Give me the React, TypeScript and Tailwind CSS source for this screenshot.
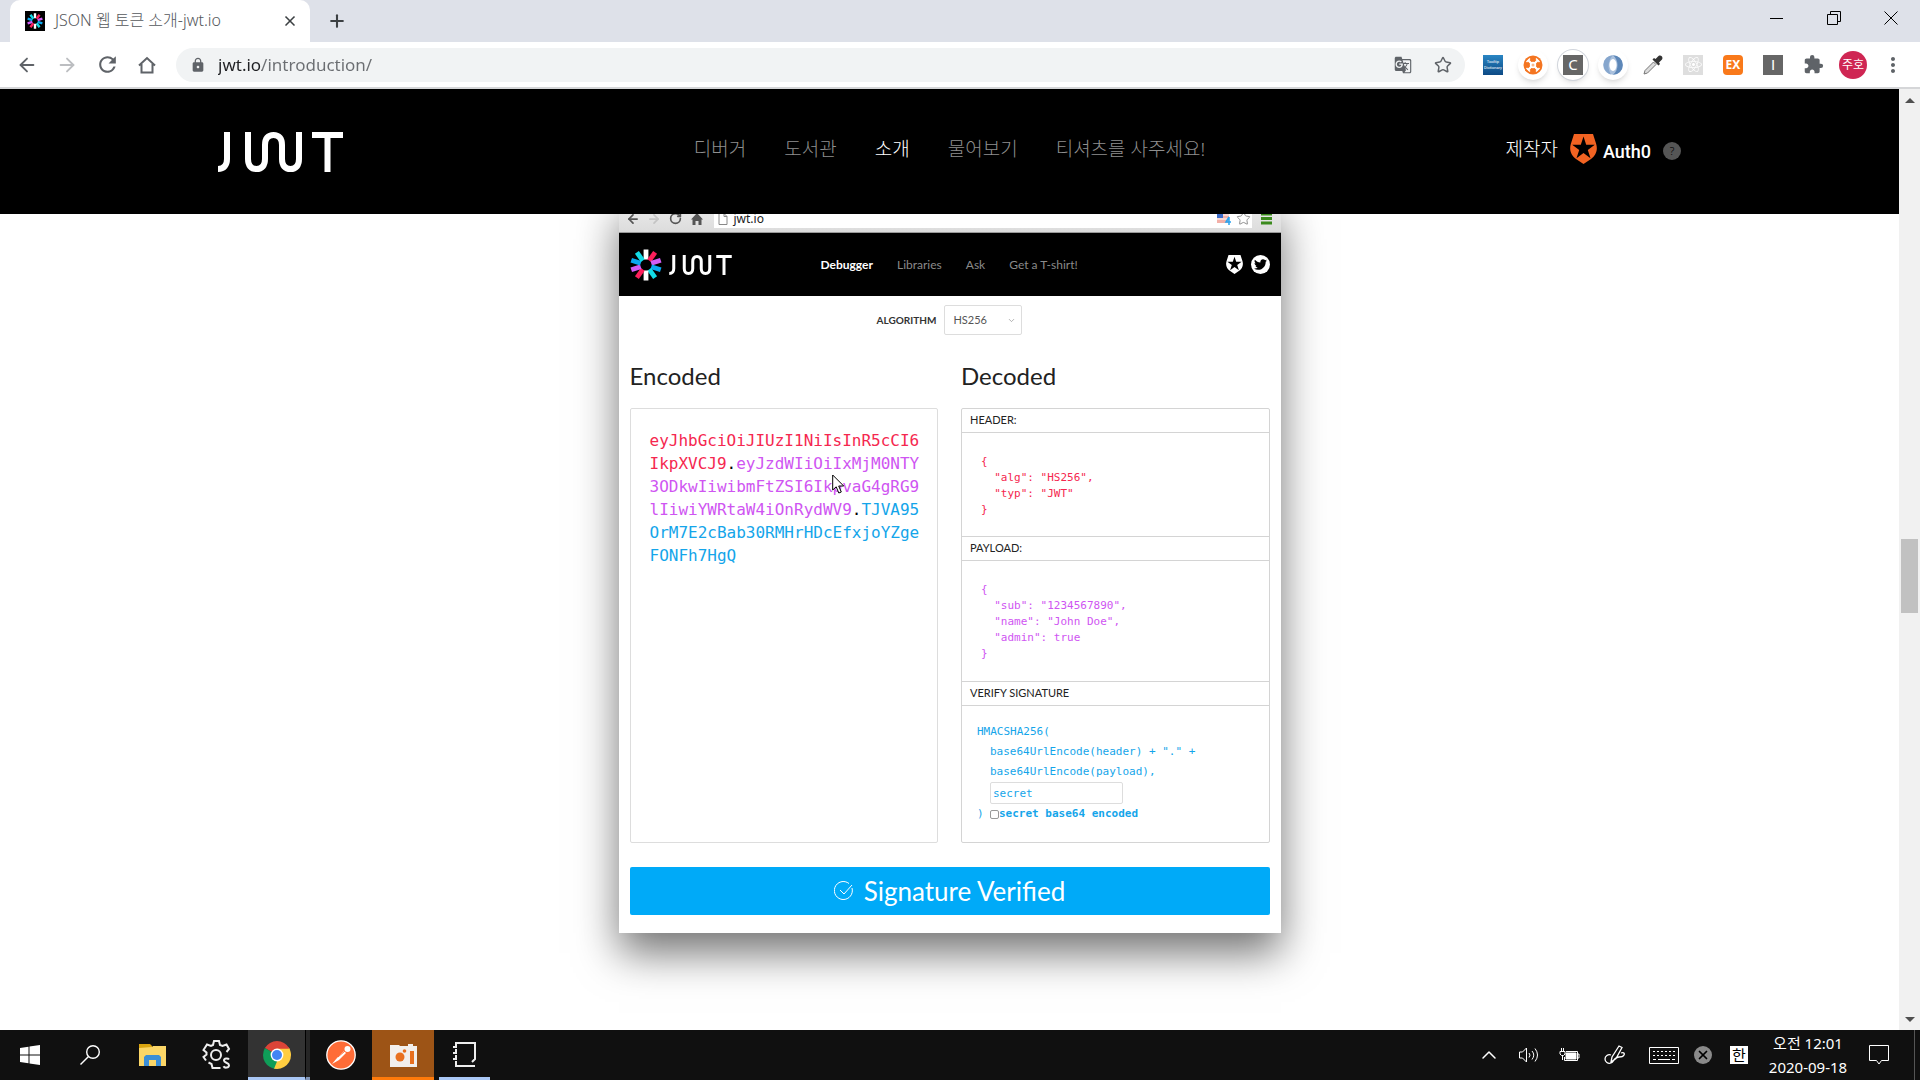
import React from "react";
import { ArrowLeft, ArrowRight, RotateCw, Star, Plus, X, ChevronUp, ChevronDown } from "lucide-react";
import { MdGTranslate, MdExtension, MdMoreVert, MdLock, MdRefresh } from "react-icons/md";
import { FaTwitter, FaReact } from "react-icons/fa";

const SANS = "font-['Noto_Sans','Noto_Sans_CJK_KR',sans-serif]";
const LATO = "font-['Lato','Noto_Sans_CJK_KR',sans-serif]";
const MONO = "font-['DejaVu_Sans_Mono',monospace]";

const BURST = ["#ffffff", "#fb1f5b", "#d25cf5", "#0aa9f1", "#12dbe6", "#ffffff", "#fb1f5b", "#d25cf5", "#0aa9f1", "#12dbe6"];

function Burst({ className }: { className: string }) {
  return (
    <svg viewBox="-16 -16 32 32" className={className} aria-hidden="true">
      {BURST.map((c, i) => (
        <rect key={i} x="-2.4" y="-15.500" width="4.800" height="10" fill={c} transform={`rotate(${i * 36})`} />
      ))}
    </svg>
  );
}

function JwtMark({ className }: { className: string }) {
  return (
    <svg viewBox="0 0 125 40" className={className} fill="none" stroke="white" strokeWidth="6" role="img" aria-label="JWT">
      <path d="M0 37c6 0 9-4 9-10V0" />
      <path d="M30 0v27c0 6.500 3 10 8.500 10s8.500-3.500 8.500-10V13c0-6.500 3-10 8.500-10S64 6.500 64 13v14c0 6.500 3 10 8.500 10S81 33.500 81 27V0" />
      <path d="M94 3h31M109.500 3v37" />
    </svg>
  );
}

function Shield({ className }: { className: string }) {
  return (
    <svg viewBox="0 0 27 30" className={className} fill="currentColor" aria-hidden="true">
      <path fillRule="evenodd" d="M4 0h19l3.200 10c2 7-1 12-5.200 15L13.500 30 6 25C1.800 22-1.200 17 .8 10zM13.500 2.500l-2.700 8.300H2.200l7 5.100-2.700 8.300 7-5.100 7 5.100-2.700-8.300 7-5.100h-8.600z" />
    </svg>
  );
}

function TabStrip() {
  return (
    <div className="flex h-[42px] items-end bg-[#dee1e9]">
      <div className="ml-[10px] flex h-[42px] w-[300px] items-center rounded-t-[10px] bg-white pl-[15px] pr-3">
        <span className="flex size-5 items-center justify-center bg-black"><Burst className="size-4" /></span>
        <span className="ml-[10px] flex-1 whitespace-nowrap pb-[2px] text-[16px] font-light text-[#55585c]">JSON 웹 토큰 소개-jwt.io</span>
        <button aria-label="Close tab" className="text-[#3c4043]"><X size={16} strokeWidth={2.5} /></button>
      </div>
      <button aria-label="New tab" className="ml-[17px] flex h-[42px] items-center text-[#3c4043]"><Plus size={20} strokeWidth={2.5} /></button>
      <div className="ml-auto mr-px flex h-9 items-center self-start text-black">
        <button aria-label="Minimize" className="flex w-[57px] justify-center"><span className="h-px w-[13px] bg-black" /></button>
        <button aria-label="Restore" className="flex w-[57px] justify-center">
          <svg width="14" height="14" fill="none" stroke="currentColor" aria-hidden="true"><path d="M.5 3.500h10v10H.5zM3.500 3.500v-3h10v10h-3" /></svg>
        </button>
        <button aria-label="Close" className="flex w-[57px] justify-center">
          <svg width="14" height="14" stroke="currentColor" aria-hidden="true"><path d="M.5.5l13 13M13.500.5l-13 13" /></svg>
        </button>
      </div>
    </div>
  );
}

const SLOT = "flex w-10 items-center justify-center";

function Toolbar() {
  return (
    <div className="flex h-[47px] items-center border-b-2 border-[#d5d6d8] bg-white pl-[7px] pr-[7px] text-[#5f6368]">
      <button aria-label="Back" className={SLOT}><ArrowLeft size={22} /></button>
      <button aria-label="Forward" className={`${SLOT} text-[#bcbec1]`}><ArrowRight size={22} /></button>
      <button aria-label="Reload" className={SLOT}><MdRefresh size={25} /></button>
      <button aria-label="Home" className={SLOT}>
        <svg width="18" height="18" viewBox="0 0 18 18" fill="none" stroke="currentColor" strokeWidth="2" aria-hidden="true"><path d="M1 9.500L9 2l8 7.500M3.500 8v8.500h11V8" /></svg>
      </button>
      <div className="ml-[9px] flex h-[34px] flex-1 items-center rounded-full bg-[#f1f3f4] pl-[14px] pr-[2px]">
        <MdLock size={16} />
        <input
          aria-label="Address"
          defaultValue="jwt.io/introduction/"
          className="ml-[12px] h-7 min-w-0 flex-1 bg-[linear-gradient(to_right,#202124_44px,#6b6e72_44px)] bg-clip-text text-[17px] leading-7 text-transparent outline-none"
        />
        <button aria-label="Translate" className={SLOT}><MdGTranslate size={18} /></button>
        <button aria-label="Bookmark" className={SLOT}><Star size={18} /></button>
      </div>
      <div className="ml-2 flex">
        <button aria-label="Tooltip Dictionary" className={SLOT}>
          <span className="flex size-5 flex-col items-center justify-center bg-gradient-to-b from-[#2a86c4] to-[#0d4a85] font-['Roboto',sans-serif] text-[4px] leading-[6px] text-white"><span>Tooltip</span><span>Dictionary</span></span>
        </button>
        <button aria-label="Extension" className={SLOT}>
          <span className="flex size-[30px] items-center justify-center rounded-full bg-white shadow-md">
            <svg viewBox="-10 -10 20 20" className="size-5" aria-hidden="true">
              <circle r="9.500" fill="#f47521" /><path d="M-5-5L5 5M5-5L-5 5" stroke="#fff" strokeWidth="2.200" /><path d="M-6.500-3L-3-6.500M3-6.500L6.500-3M-6.500 3L-3 6.500M3 6.500L6.500 3" stroke="#fff" strokeWidth="1.500" /><circle r="3.200" fill="#fff" /><circle r="1.500" fill="#f9b98c" />
            </svg>
          </span>
        </button>
        <button aria-label="Extension C" className={SLOT}>
          <span className="flex size-[30px] items-center justify-center rounded-full bg-white shadow-md ring-1 ring-gray-300"><span className="flex size-5 items-center justify-center bg-[#666] text-[15px] leading-none text-white">C</span></span>
        </button>
        <button aria-label="Extension" className={SLOT}>
          <span className="flex size-[30px] items-center justify-center rounded-full bg-white shadow-md">
            <svg viewBox="-10 -10 20 20" className="size-5" aria-hidden="true">
              <circle r="9.800" fill="#a9c0dd" /><path d="M0-9.800A9.800 9.800 0 0 1 0 9.800C6 5 6-5 0-9.800" fill="#5d87b8" /><path d="M0-9.800A9.800 9.800 0 0 0-2 9.500C-6 4-5-5 0-9.800" fill="#86a6cd" /><ellipse rx="3.600" ry="6" fill="#fff" />
            </svg>
          </span>
        </button>
        <button aria-label="Color picker" className={SLOT}>
          <svg viewBox="0 0 20 20" className="size-5" aria-hidden="true">
            <path d="M1 19l1-3.500L10.500 7 13 9.500 4.500 18z" fill="#dcdcdc" stroke="#777" /><path d="M9.500 4.500l6 6L17 9l-1-1.500L19 4.500C20.500 2 18-.5 15.500 1l-3 3L11 3z" fill="#333" />
          </svg>
        </button>
        <button aria-label="React tools" className={SLOT}><span className="flex size-5 items-center justify-center bg-[#dedede] text-white"><FaReact size={17} /></span></button>
        <button aria-label="EX" className={SLOT}><span className="flex size-5 items-center justify-center rounded-[4px] bg-[#f9791a] text-[12px] font-bold leading-none text-white">EX</span></button>
        <button aria-label="Extension I" className={SLOT}><span className="flex size-5 items-center justify-center bg-[#666] font-['Liberation_Sans',sans-serif] text-[15px] leading-none text-white">I</span></button>
        <button aria-label="Extensions" className={SLOT}><MdExtension size={21} /></button>
        <button aria-label="Profile" className={SLOT}><span className="flex size-7 items-center justify-center rounded-full bg-[#cf2653] text-[12px] text-white">주호</span></button>
        <button aria-label="Menu" className={SLOT}><MdMoreVert size={24} /></button>
      </div>
    </div>
  );
}

function SiteHeader() {
  return (
    <header className="relative z-10 grid h-[125px] shrink-0 grid-cols-[1fr_auto_1fr] items-center bg-black px-[218px] pb-[5px] text-[19px] font-light text-[#8f8f8f]">
      <a href="#home"><JwtMark className="mt-[6px] h-10 w-[125px]" /></a>
      <nav className="flex gap-[38px] whitespace-nowrap">
        <a href="#debugger">디버거</a>
        <a href="#libraries">도서관</a>
        <a href="#introduction" className="text-white">소개</a>
        <a href="#ask">물어보기</a>
        <a href="#tshirt">티셔츠를 사주세요!</a>
      </nav>
      <div className="flex items-center justify-end text-white">
        <span>제작자</span>
        <a href="#auth0" className="ml-3 flex items-center">
          <Shield className="h-[30px] w-[27px] text-[#f26322]" />
          <span className="ml-[6px] pt-1 font-['Roboto',sans-serif] text-[18px] font-medium">Auth0</span>
        </a>
        <button aria-label="Help" className="ml-3 mt-1 flex size-[18px] items-center justify-center rounded-full bg-[#555] text-[11px] text-black">?</button>
      </div>
    </header>
  );
}

function SectionLabel({ children }: { children: React.ReactNode }) {
  return <h3 className="flex h-6 items-center border-b border-[#d4d4d4] pl-2 text-[11px] text-[#222]">{children}</h3>;
}

const CODE = `${MONO} whitespace-pre pl-[19px] text-[11px] leading-4`;

function DebuggerWindow() {
  return (
    <div className={`mx-auto -mt-[15px] w-[662px] bg-white shadow-[0_20px_40px_rgba(0,0,0,0.55)] ${LATO}`}>
      <div className="flex h-[34px] items-center gap-[7px] border-b border-[#999] bg-gradient-to-b from-[#eee] to-[#dcdcdc] pl-[7px] pr-2 pt-[6px] text-[#555]">
        <ArrowLeft size={14} strokeWidth={3} />
        <ArrowRight size={14} strokeWidth={3} className="text-[#c4c4c4]" />
        <RotateCw size={13} strokeWidth={3} className="ml-px" />
        <svg width="12" height="12" viewBox="0 0 12 12" fill="currentColor" className="ml-[2px]" aria-hidden="true"><path d="M6 0l6 6.500h-1.500V12h-3V8h-3v4h-3V6.500H0z" /></svg>
        <div className="ml-[4px] flex h-[19px] flex-1 items-center bg-white pl-1 pr-px text-[12px] text-[#222]">
          <svg width="10" height="12" fill="none" stroke="#888" aria-hidden="true"><path d="M1 .5h5l3 3v8H1zM6 .5v3h3" /></svg>
          <span className={`ml-[6px] ${SANS}`}>jwt.io</span>
          <svg width="16" height="13" className="ml-auto" aria-hidden="true"><path d="M1 1h12v10H1z" fill="#f3b0a8" /><path d="M1 3h12M1 7h12" stroke="#fff" /><path d="M1 1h6v5H1z" fill="#3c6cc8" /><path d="M13 5l-3 5h5M13 5v8" stroke="#2aa3ef" fill="none" strokeWidth="1.500" /></svg>
          <Star size={15} strokeWidth={1.5} className="ml-1 text-[#888]" />
        </div>
        <svg width="11" height="13" stroke="#3b8a1d" strokeWidth="3" className="ml-[2px] mr-px" aria-hidden="true"><path d="M0 2h11M0 6.500h11M0 11h11" /></svg>
      </div>
      <div className="flex h-[63px] items-center bg-black px-[11px] text-[12px] text-[#8a8a8a]">
        <Burst className="size-8" />
        <JwtMark className="ml-[7px] h-5 w-[63px]" />
        <nav className="ml-[89px] flex gap-6">
          <a href="#w-debugger" className="font-bold text-white">Debugger</a>
          <a href="#w-libraries">Libraries</a>
          <a href="#w-ask">Ask</a>
          <a href="#w-tshirt">Get a T-shirt!</a>
        </nav>
        <div className="ml-auto flex items-center gap-2 text-white">
          <Shield className="h-[19px] w-[17px]" />
          <span className="flex size-[19px] items-center justify-center rounded-full bg-white text-black"><FaTwitter size={13} /></span>
        </div>
      </div>
      <div className="flex items-center justify-center gap-2 pb-[23px] pt-[9px] text-[10px]">
        <label htmlFor="algorithm" className="font-bold text-[#333]">ALGORITHM</label>
        <div className="relative">
          <select id="algorithm" className="h-[30px] w-[78px] appearance-none rounded-xs border border-[#ddd] pl-2 text-[11px] text-[#555]"><option>HS256</option></select>
          <ChevronDown size={9} className="pointer-events-none absolute right-[6px] top-[11px] text-[#999]" />
        </div>
      </div>
      <div className="grid grid-cols-2 gap-[23px] px-[11px] text-[#222]">
        <section className="flex flex-col">
          <h2 className="mb-[14px] text-[24px] leading-9">Encoded</h2>
          <div className={`${MONO} flex-1 rounded-xs border border-[#ddd] py-[20px] pl-[19px] text-[16px] leading-[23px]`}>
            <p className="text-[#f5274f]">eyJhbGciOiJIUzI1NiIsInR5cCI6</p>
            <p className="text-[#cf55f2]"><span className="text-[#f5274f]">IkpXVCJ9</span><span className="text-black">.</span>eyJzdWIiOiIxMjM0NTY</p>
            <p className="text-[#cf55f2]">3ODkwIiwibmFtZSI6IkpvaG4gRG9</p>
            <p className="text-[#cf55f2]">lIiwiYWRtaW4iOnRydWV9<span className="text-black">.</span><span className="text-[#14a5ea]">TJVA95</span></p>
            <p className="text-[#14a5ea]">OrM7E2cBab30RMHrHDcEfxjoYZge</p>
            <p className="text-[#14a5ea]">FONFh7HgQ</p>
          </div>
        </section>
        <section>
          <h2 className="mb-[14px] text-[24px] leading-9">Decoded</h2>
          <div className="rounded-xs border border-[#d4d4d4]">
            <SectionLabel>HEADER:</SectionLabel>
            <pre className={`${CODE} border-b border-[#d4d4d4] pb-[18px] pt-[21px] text-[#f5274f]`}>{`{
  "alg": "HS256",
  "typ": "JWT"
}`}</pre>
            <SectionLabel>PAYLOAD:</SectionLabel>
            <pre className={`${CODE} border-b border-[#d4d4d4] pb-[19px] pt-[21px] text-[#cf55f2]`}>{`{
  "sub": "1234567890",
  "name": "John Doe",
  "admin": true
}`}</pre>
            <SectionLabel>VERIFY SIGNATURE</SectionLabel>
            <div className={`${MONO} whitespace-pre pb-[18px] pl-[15px] pt-[16px] text-[11px] leading-5 text-[#14a5ea]`}>
              <p>HMACSHA256(</p>
              <p className="pl-[13px]">base64UrlEncode(header) + "." +</p>
              <p className="pl-[13px]">base64UrlEncode(payload),</p>
              <input aria-label="Secret" defaultValue="secret" className="ml-[13px] block h-[22px] w-[133px] rounded-xs border border-[#ddd] pl-[2px]" />
              <div className="flex items-center">
                <span className="w-[13px]">)</span>
                <input id="b64" type="checkbox" className="size-[9px] appearance-none rounded-xs border border-[#999] bg-white" />
                <label htmlFor="b64" className="font-bold">secret base64 encoded</label>
              </div>
            </div>
          </div>
        </section>
      </div>
      <div className="px-[11px] pb-[18px] pt-6">
        <div className="flex h-12 items-center justify-center gap-[10px] rounded-xs bg-[#00aaf8] text-[26px] text-white">
          <svg width="20" height="20" viewBox="0 0 20 20" fill="none" stroke="currentColor" aria-hidden="true"><path d="M18 7a9 9 0 1 1-3-4.500M6 9l4 4 8-9" /></svg>
          Signature Verified
        </div>
      </div>
    </div>
  );
}

function Scrollbar() {
  return (
    <div className="flex w-[21px] shrink-0 flex-col items-center bg-[#f1f1f1] py-2" aria-hidden="true">
      <span className="mt-px border-x-[5px] border-b-[5px] border-x-transparent border-b-[#505050]" />
      <span className="mt-[436px] h-[74px] w-[17px] bg-[#c1c1c1]" />
      <span className="mt-auto border-x-[5px] border-t-[5px] border-x-transparent border-t-[#505050]" />
    </div>
  );
}

function Taskbar() {
  const cell = "flex h-full w-[62px] items-center justify-center";
  return (
    <footer className="flex h-[50px] shrink-0 items-center bg-[#101010] text-white">
      <button aria-label="Start" className="flex h-full w-[60px] items-center justify-center">
        <svg width="20" height="20" fill="white" aria-hidden="true"><path d="M0 3l8.500-1.300v7.800H0zM9.500 1.500L20 0v9.500H9.500zM0 10.500h8.500v7.800L0 17zM9.500 10.500H20V20L9.500 18.500z" /></svg>
      </button>
      <button aria-label="Search" className="flex h-full w-[60px] items-center justify-center">
        <svg width="20" height="20" fill="none" stroke="white" strokeWidth="1.400" aria-hidden="true"><circle cx="13" cy="7" r="6.300" /><path d="M8.500 11.500L.5 19.500" /></svg>
      </button>
      <button aria-label="File Explorer" className="flex h-full w-[66px] items-center justify-center">
        <svg width="28" height="24" aria-hidden="true"><path d="M0 1h11l2 2v4H0z" fill="#d9a40f" /><path d="M0 5l13-1 1-1h13v20H0z" fill="#fbd667" /><path d="M5 23v-9l2-2h13l2 2v9h-5v-6h-7v6z" fill="#3b8ed6" /></svg>
      </button>
      <button aria-label="Settings" className={cell}>
        <svg width="30" height="30" viewBox="0 0 30 30" fill="none" stroke="#eee" strokeWidth="2" aria-hidden="true">
          <circle cx="14" cy="15" r="5" />
          <path d="M18.500 28h-8l-1-4-3-1.500M4 20.500L1.500 17l3-2.500v-2L1.500 10 5 4.500l4 1.500 2-1 1-4h5l1 4 2.500 1 4-1.500L27 9l-2.500 3" /><path d="M27 19.500c-1-1.500-5-1.500-5 1s5 2 5 4.800-4.500 3-5.500 1" />
        </svg>
      </button>
      <button aria-label="Chrome" className="flex h-full w-[57px] items-center justify-center border-b-[3px] border-[#a9c7f5] bg-[#333] pt-[3px]">
        <svg width="28" height="28" viewBox="-14 -14 28 28" aria-hidden="true">
          <path d="M0 0L-12.120-7A14 14 0 0 1 12.120-7z" fill="#db4437" /><path d="M0 0L12.120-7A14 14 0 0 1 0 14z" fill="#ffcd40" /><path d="M0 0V14A14 14 0 0 1-12.120-7z" fill="#0f9d58" />
          <path d="M0-6.500H12.300L14 0 5.600 3.200z" fill="#ffcd40" /><path d="M0-6.500V-8H11.500L12.400-6.500z" fill="#db4437" /><path d="M5.600 3.200L0 14-3 13.700 0 6.400z" fill="#ffcd40" /><circle r="6.400" fill="#fff" /><circle r="5" fill="#4285f4" />
        </svg>
      </button>
      <span className="h-full w-[5px] border-b-[3px] border-l border-b-[#8197ba] border-l-black bg-[#262626]" />
      <button aria-label="Postman" className={cell}>
        <svg width="30" height="30" viewBox="-15 -15 30 30" aria-hidden="true"><circle r="14.200" fill="#ff6c37" stroke="#fff" strokeWidth="1.300" /><path d="M-9 9l5-6 7-7 2 2-7 7z" fill="#fff" /><circle cx="6.500" cy="-6" r="3" fill="#fff" /><path d="M-3 2l7-6" stroke="#ff6c37" /></svg>
      </button>
      <button aria-label="Recorder" className={`${cell} border-b-[3px] border-[#ff7a0a] bg-[#9d5416] pt-[3px]`}>
        <svg width="27" height="23" aria-hidden="true"><path d="M0 1h9l1 1h8V0h5v2h4v21H0z" fill="#f2efec" /><circle cx="10" cy="13" r="4.500" fill="#e8701f" /><circle cx="14.500" cy="7" r="1.800" fill="#e8701f" /><path d="M20 7h4v13h-4z" fill="#e8701f" /></svg>
      </button>
      <button aria-label="Notebook" className="ml-[5px] flex h-full w-[51px] items-center justify-center border-b-[3px] border-[#a9c7f5] pt-[3px]">
        <svg width="24" height="26" fill="none" stroke="#eee" strokeWidth="2" aria-hidden="true"><path d="M3 4V1h19v16l-3 3M3 7v3M3 13v3M3 19v5h19M0 5h4M0 11h4M0 17h4" /></svg>
      </button>
      <div className="ml-auto flex h-full items-center">
        <button aria-label="Show hidden icons" className="flex w-10 justify-center"><ChevronUp size={24} strokeWidth={1.5} /></button>
        <button aria-label="Volume" className="flex w-10 justify-center">
          <svg width="21" height="18" fill="none" stroke="white" aria-hidden="true"><path d="M.5 6h3l4-4v14l-4-4h-3zM10 7q2 2 0 4.500M13 5q3.500 4 0 8.500M16 2.500q5 6.500 0 13" /></svg>
        </button>
        <button aria-label="Battery" className="flex w-10 justify-center">
          <svg width="21" height="14" fill="none" stroke="white" aria-hidden="true"><path d="M7 3.500h11.500v9h-13V9M18.500 6h1.500v4h-1.500M1 3.500h5V6L4.500 7.500h-2L1 6zM2.500 0v3M4.500 0v3M3.500 8v4" /><path d="M7 5h10v6H7z" fill="white" /></svg>
        </button>
        <button aria-label="Pen" className="flex w-[50px] justify-center">
          <svg width="21" height="20" fill="none" stroke="white" strokeWidth="1.300" aria-hidden="true"><path d="M7 17l1-5 7-11 3 1.500-6 11zM7 17l5-3.500M7 10c-3-1-6 1-6 4s3 5 6 4 3-6 8-6c3 0 4 0 5-2s-1-3-3-2" /></svg>
        </button>
        <button aria-label="Keyboard" className="flex w-[50px] justify-center">
          <svg width="30" height="17" fill="none" stroke="white" aria-hidden="true"><path d="M.5.5h29v16H.5z" /><path d="M4 4.500h22M4 8.500h22" strokeDasharray="2 2" /><path d="M4 12.500h3M9 12.500h12M23 12.500h3" /></svg>
        </button>
        <span className="ml-[5px] flex size-[18px] items-center justify-center rounded-full bg-[#8a8a8a] text-black"><X size={14} strokeWidth={3} /></span>
        <span className="ml-[18px] flex size-[18px] items-center justify-center bg-white text-[15px] leading-none text-black">한</span>
        <time className="ml-[20px] w-[80px] text-center text-[15px] leading-6">오전 12:01<br />2020-09-18</time>
        <button aria-label="Notifications" className="ml-[21px] mr-[25px]">
          <svg width="20" height="20" fill="none" stroke="white" aria-hidden="true"><path d="M.5.5h19v15h-7L10 19l-2.500-3.500h-7z" /></svg>
        </button>
        <span className="mr-[5px] h-full w-px bg-[#555]" />
      </div>
    </footer>
  );
}

export default function App() {
  return (
    <div className={`relative flex h-screen flex-col overflow-hidden bg-white ${SANS}`}>
      <TabStrip />
      <Toolbar />
      <div className="flex min-h-0 flex-1">
        <main className="flex min-w-0 flex-1 flex-col overflow-hidden">
          <SiteHeader />
          <DebuggerWindow />
        </main>
        <Scrollbar />
      </div>
      <Taskbar />
      <svg width="13" height="20" className="absolute left-[832px] top-[474px]" aria-hidden="true"><path d="M.7 1v15l3.500-3.200L6.800 19l2.500-1-2.600-6h5z" fill="white" stroke="black" /></svg>
    </div>
  );
}
